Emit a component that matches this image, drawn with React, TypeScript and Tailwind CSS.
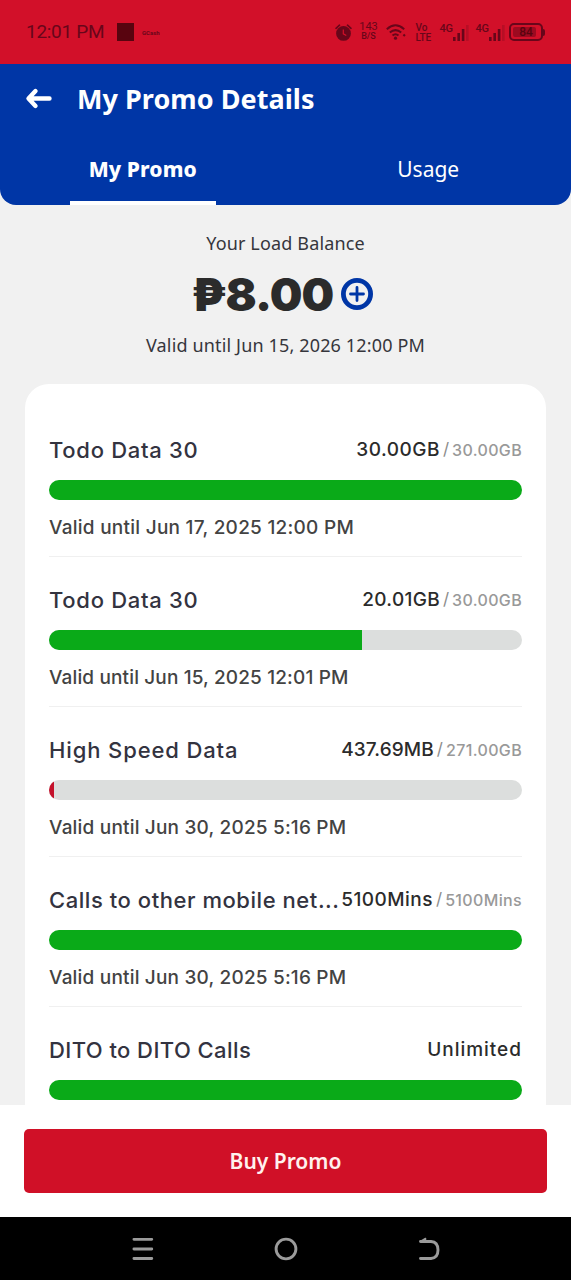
const PROMOS = [
  {
    name: 'Todo Data 30',
    nameTracking: 'tracking-[0.7px]',
    left: '30.00GB',
    leftTracking: 'tracking-[0.5px]',
    total: '30.00GB',
    percent: 100,
    color: 'bg-[#0aaa18]',
    valid: 'Valid until Jun 17, 2025 12:00 PM',
    validTracking: 'tracking-[0.26px]',
  },
  {
    name: 'Todo Data 30',
    nameTracking: 'tracking-[0.7px]',
    left: '20.01GB',
    leftTracking: 'tracking-[0.3px]',
    total: '30.00GB',
    percent: 66.2,
    color: 'bg-[#0aaa18]',
    valid: 'Valid until Jun 15, 2025 12:01 PM',
    validTracking: 'tracking-[0.14px]',
  },
  {
    name: 'High Speed Data',
    nameTracking: 'tracking-[0.88px]',
    left: '437.69MB',
    leftTracking: 'tracking-[0.1px]',
    total: '271.00GB',
    percent: 1.1,
    color: 'bg-[#c4122b]',
    valid: 'Valid until Jun 30, 2025 5:16 PM',
    validTracking: 'tracking-[0.19px]',
  },
  {
    name: 'Calls to other mobile net...',
    nameTracking: 'tracking-[0.55px]',
    left: '5100Mins',
    leftTracking: 'tracking-[0.48px]',
    total: '5100Mins',
    percent: 100,
    color: 'bg-[#0aaa18]',
    valid: 'Valid until Jun 30, 2025 5:16 PM',
    validTracking: 'tracking-[0.19px]',
  },
  {
    name: 'DITO to DITO Calls',
    nameTracking: 'tracking-[0.42px]',
    left: 'Unlimited',
    leftTracking: 'tracking-[0.98px]',
    total: '',
    percent: 100,
    color: 'bg-[#0aaa18]',
    valid: '',
    validTracking: '',
  },
];

const Signal = () => (
  <div className="flex">
    <span className="h-3 w-[13px] text-[11px] font-medium leading-3 tracking-[-0.3px]">4G</span>
    <svg className="mt-[1px] h-[17px] w-4" viewBox="0 0 16 17" fill="currentColor">
      <rect x="0" y="13" width="2.6" height="4" />
      <rect x="4.4" y="9" width="2.6" height="8" />
      <rect x="8.8" y="5" width="2.6" height="12" />
      <rect x="13" y="1" width="2.6" height="16" opacity="0.25" />
    </svg>
  </div>
);

const StatusBar = () => (
  <div className="flex h-16 shrink-0 items-center bg-[#d21029] pl-[26px] pr-6 font-['Roboto',sans-serif] text-[#68061a]">
    <span className="w-[91px] whitespace-nowrap text-[19px] tracking-[-0.3px]">12:01 PM</span>
    <div className="h-[18px] w-[17px] bg-[#58040f]" />
    <span className="ml-2 text-[6px] font-bold">GCash</span>

    <div className="ml-auto mr-[2px] flex h-[18px] items-start">
      {/* Alarm */}
      <svg className="mt-px h-[17px] w-[17px]" viewBox="0 0 17 17" fill="none">
        <circle cx="8.5" cy="9.4" r="7.4" fill="currentColor" />
        <path d="M1 4.3L4.5 1.2M16 4.3L12.5 1.2" stroke="currentColor" strokeWidth="1.6" strokeLinecap="round" />
        <path d="M8.3 5.5v4.3l3 1.8" stroke="#d21029" strokeWidth="1.2" />
      </svg>
      <div className="ml-2 flex w-[18px] flex-col items-center">
        <span className="-mt-[2px] text-[11px] leading-[11px]">143</span>
        <span className="text-[9px] font-medium leading-[9px]">B/S</span>
      </div>
      {/* Wifi */}
      <svg className="ml-2 mt-px h-4 w-5" viewBox="0 0 20 16" fill="none" stroke="currentColor" strokeWidth="2">
        <path d="M.8 5.2Q9.5-2.6 18.2 5.2M3.8 8.6Q9.5 3.6 15.2 8.6M6.5 11.6Q9.5 9 12.5 11.6" />
        <circle cx="9.5" cy="14.2" r="1.6" fill="currentColor" stroke="none" />
        <path d="M18.2 9.8l1.5 1.5-1.5 1.5-1.5-1.5z" fill="currentColor" stroke="none" />
      </svg>
      <div className="ml-2.5 flex w-[19px] flex-col text-[10px] font-medium leading-[9.5px]">
        <span>Vo</span>
        <span className="tracking-[-0.2px]">LTE</span>
      </div>
      <div className="ml-[5px]"><Signal /></div>
      <div className="ml-[7px]"><Signal /></div>
      {/* Battery */}
      <div className="ml-1 flex items-center">
        <div className="flex h-[18px] w-[34px] items-center rounded-[5px] border-2 border-current p-[2px]">
          <div className="flex h-full w-[23px] items-center justify-center rounded-[2px] bg-[#9c0a20] pl-1 text-[12px] font-medium text-[#58040f]">84</div>
        </div>
        <div className="h-[7px] w-[2.5px] rounded-r bg-current" />
      </div>
    </div>
  </div>
);

const Header = () => (
  <header className="flex h-[141px] shrink-0 flex-col rounded-b-2xl bg-[#0036a6] text-white">
    <div className="flex h-[70px] items-center pl-[25px]">
      <svg className="h-6 w-7" viewBox="0 0 28 24" fill="none" stroke="currentColor" strokeWidth="4.4" strokeLinecap="round" strokeLinejoin="round">
        <path d="M24.5 11.5H4M10.5 4L3.500 11.500l7 7.500" />
      </svg>
      <h1 className="ml-6 text-[27px] font-bold tracking-[0.05px]">My Promo Details</h1>
    </div>
    <div className="grid flex-1 grid-cols-2 text-[21px]">
      <div className="flex flex-col items-center">
        <span className="flex flex-1 items-center pt-1 font-extrabold tracking-[0.1px]">My Promo</span>
        <div className="h-1 w-[146px] bg-white" />
      </div>
      <div className="flex justify-center">
        <span className="flex items-center">Usage</span>
      </div>
    </div>
  </header>
);

export default function App() {
  return (
    <div className="flex h-[1280px] w-[571px] flex-col overflow-hidden bg-[#f1f1f1] font-['Noto_Sans',sans-serif]">
      <StatusBar />
      <Header />

      <main className="flex min-h-0 flex-1 flex-col overflow-hidden">
        {/* Balance */}
        <section className="flex h-[179px] shrink-0 flex-col items-center pt-6 text-[#36363c]">
          <p className="text-[18px] leading-7 tracking-[0.15px]">Your Load Balance</p>
          <div className="mt-2 flex h-[58px] items-center pr-1.5 text-[#2b2b2b]">
            <span className="font-['Inter',sans-serif] text-[46px] font-black tracking-[-0.9px]">₱8.00</span>
            <svg className="ml-2 h-8 w-8 text-[#0036a6]" viewBox="0 0 32 32" fill="none" stroke="currentColor">
              <circle cx="16" cy="16" r="13.6" strokeWidth="4.8" />
              <path d="M16 9.5v13M9.5 16h13" strokeWidth="2.8" strokeLinecap="round" />
            </svg>
          </div>
          <p className="mt-2 text-[18px] leading-7 tracking-[0.15px]">Valid until Jun 15, 2026 12:00 PM</p>
        </section>

        {/* Promo list */}
        <section className="mx-[25px] rounded-t-3xl bg-white px-6 pt-[23px] font-['Inter',sans-serif] font-medium">
          {PROMOS.map((promo, idx) => (
            <div key={idx} className="h-[150px] border-b border-[#f0f0f0] pt-[29px]">
              <div className="flex h-7 items-center justify-between whitespace-nowrap">
                <h2 className={`text-[22px] text-[#33333f] ${promo.nameTracking}`}>{promo.name}</h2>
                <div className="flex items-center">
                  <span className={`pt-px text-[19px] text-[#2b2b2b] ${promo.leftTracking}`}>{promo.left}</span>
                  {promo.total && (
                    <>
                      <span className="ml-[3px] text-[17px] font-normal text-[#8c8c8c]">/</span>
                      <span className="ml-[3px] text-[16px] tracking-[0.35px] text-[#999]">{promo.total}</span>
                    </>
                  )}
                </div>
              </div>
              <div className="mt-4 h-[19.5px] overflow-hidden rounded-full bg-[#dcdedd]">
                <div className={`h-full ${promo.color}`} style={{ width: `${promo.percent}%` }} />
              </div>
              {promo.valid && (
                <p className={`mt-[14.5px] text-[19px] leading-7 text-[#434343] ${promo.validTracking}`}>{promo.valid}</p>
              )}
            </div>
          ))}
        </section>
      </main>

      <footer className="h-[112px] shrink-0 bg-white px-6 pt-6">
        <button className="flex h-16 w-full items-center justify-center rounded-[5px] bg-[#d01027] pt-px text-[21px] font-semibold text-[#fff1ee]">Buy Promo</button>
      </footer>

      {/* System navigation */}
      <nav className="flex h-[63px] shrink-0 items-center justify-center gap-[115px] bg-black text-[#9b9b9b]">
        <svg className="h-7 w-7" viewBox="0 0 28 28" fill="none" stroke="currentColor" strokeWidth="2.8" strokeLinecap="round">
          <path d="M4.900 4.300h17.900M4.900 14h17.900M4.900 23.500h17.900" />
        </svg>
        <svg className="h-7 w-7" viewBox="0 0 28 28" fill="none" stroke="currentColor" strokeWidth="2.9">
          <circle cx="14" cy="14" r="9.9" />
        </svg>
        <svg className="h-7 w-7" viewBox="0 0 28 28" fill="none" stroke="currentColor" strokeWidth="2.9" strokeLinecap="round" strokeLinejoin="round">
          <path d="M5.500 23.500H16q7-.5 7-8.500t-7-8.500H5.500" />
          <path d="M5.500 6.500L10.500 3.500v2.500z" fill="currentColor" strokeWidth="1.500" />
        </svg>
      </nav>
    </div>
  );
}
